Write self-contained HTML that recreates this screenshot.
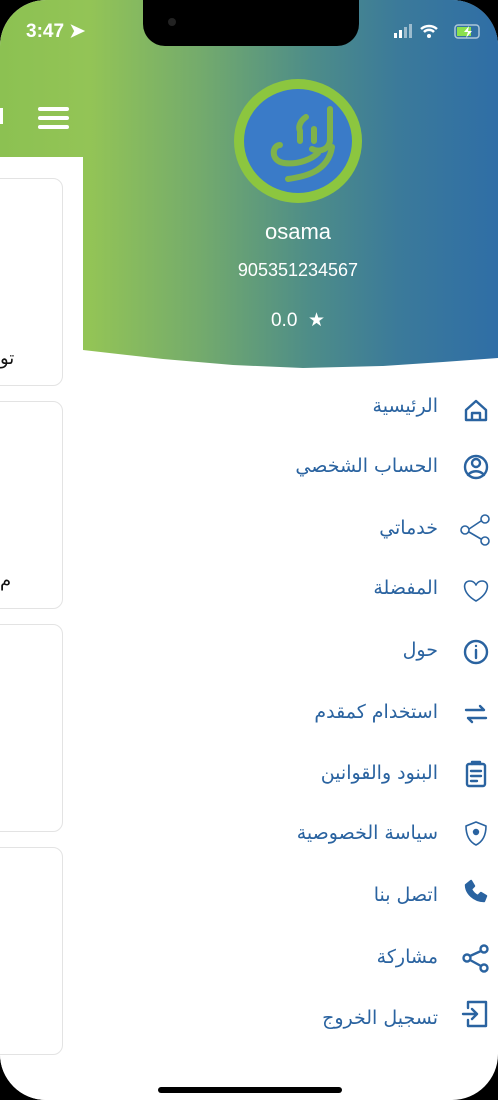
<!DOCTYPE html>
<html><head><meta charset="utf-8"><style>
*{margin:0;padding:0;box-sizing:border-box}
body{width:498px;height:1100px;background:#000;overflow:hidden;position:relative;font-family:"Liberation Sans",sans-serif}
#screen{position:absolute;left:0;top:0;width:498px;height:1100px;border-radius:46px;overflow:hidden;background:#fff}
.grad{position:absolute;top:0;background:linear-gradient(90deg,#8cc152 0%,#93c456 18%,#74ab6c 40%,#4e8d88 62%,#3b7a9a 80%,#2f6ea6 100%);background-size:498px 100%}
.topbar{left:0;width:498px;height:157px}
.drawer{left:83px;width:415px;height:372px;background-position:-83px 0;clip-path:polygon(0 0,415px 0,415px 358px,360px 362px,300px 366px,220px 368px,150px 365px,80px 359px,0 350px)}
.leftpage{position:absolute;left:0;top:157px;width:83px;height:943px;background:#fff}
.card{position:absolute;left:-20px;width:83px;border:1px solid #e3e3e3;border-radius:10px;background:#fff}
.notch{position:absolute;left:143px;top:0;width:216px;height:46px;background:#000;border-radius:0 0 22px 22px}
.item{position:absolute;right:60px;color:#2a63a0;font-size:19px;direction:rtl;font-family:"DejaVu Sans",sans-serif}
.w{color:#fff;position:absolute;text-align:center}
</style></head><body>
<div id="screen">
<div class="grad topbar"></div>
<div class="leftpage"></div>
<div class="grad drawer"></div>
<div class="card" style="top:178px;height:208px"></div>
<div class="card" style="top:401px;height:208px"></div>
<div class="card" style="top:624px;height:208px"></div>
<div class="card" style="top:847px;height:208px"></div>
<div style="position:absolute;left:0;top:348px;font-size:18px;color:#111;font-family:'DejaVu Sans',sans-serif">تو</div>
<div style="position:absolute;left:0;top:570px;font-size:18px;color:#111;font-family:'DejaVu Sans',sans-serif">م</div>
<div style="position:absolute;left:0;top:108px;width:3px;height:16px;background:#fff"></div>
<div style="position:absolute;left:38px;top:107px;width:31px;height:4px;background:#fff;border-radius:2px;box-shadow:0 9px 0 #fff,0 18px 0 #fff"></div>
<div class="notch"></div>
<div style="position:absolute;left:168px;top:18px;width:8px;height:8px;border-radius:50%;background:#222"></div>
<div class="w" style="left:26px;top:20px;font-size:19px;font-weight:bold">3:47 ➤</div>
<svg style="position:absolute;left:394px;top:22px" width="92" height="20" viewBox="0 0 92 20">
<rect x="0" y="11" width="3" height="5" fill="#fff"/><rect x="5" y="8" width="3" height="8" fill="#fff"/><rect x="10" y="5" width="3" height="11" fill="#fff" opacity=".5"/><rect x="15" y="2" width="3" height="14" fill="#fff" opacity=".5"/>
<path d="M27 7a12 12 0 0 1 16 0M30 10a7 7 0 0 1 10 0" stroke="#fff" stroke-width="2.5" fill="none"/><circle cx="35" cy="14" r="2" fill="#fff"/>
<rect x="61" y="3" width="24" height="13" rx="3" fill="none" stroke="#fff" stroke-opacity=".6" stroke-width="1.5"/><rect x="63" y="5" width="14" height="9" fill="#8be04e"/><path d="M75 4l-5 6h4l-2 6 6-7h-4z" fill="#fff"/>
</svg>
<div style="position:absolute;left:234px;top:79px;width:128px;height:124px;border-radius:50%;background:#8cc63f"></div>
<div style="position:absolute;left:244px;top:89px;width:108px;height:104px;border-radius:50%;background:#3a7bc8"></div>
<svg style="position:absolute;left:244px;top:89px" width="108" height="104" viewBox="0 0 108 104" fill="none" stroke="#7fb24a" stroke-width="6" stroke-linecap="round">
<path d="M62 28c-6 4-8 10-6 14"/><path d="M86 20v30c0 10-10 14-18 10M70 40v12M56 44v8"/>
<path d="M36 56c-8 0-10 16 4 18 14 2 28-4 34-10M88 58c-4 26-30 30-44 32"/>
</svg>
<div class="w" style="left:200px;width:196px;top:219px;font-size:22px">osama</div>
<div class="w" style="left:200px;width:196px;top:260px;font-size:18px">905351234567</div>
<div class="w" style="left:200px;width:196px;top:309px;font-size:19px">0.0 &nbsp;★</div>

<div class="item" style="top:395px">الرئيسية</div>
<div class="item" style="top:455px">الحساب الشخصي</div>
<div class="item" style="top:517px">خدماتي</div>
<div class="item" style="top:577px">المفضلة</div>
<div class="item" style="top:639px">حول</div>
<div class="item" style="top:701px">استخدام كمقدم</div>
<div class="item" style="top:762px">البنود والقوانين</div>
<div class="item" style="top:822px">سياسة الخصوصية</div>
<div class="item" style="top:884px">اتصل بنا</div>
<div class="item" style="top:946px">مشاركة</div>
<div class="item" style="top:1007px">تسجيل الخروج</div>

<svg style="position:absolute;left:458px;top:392px" width="36" height="650" viewBox="0 0 36 650" fill="none" stroke="#2a63a0" stroke-width="2.4" stroke-linecap="round" stroke-linejoin="round">
<path d="M8 18l10-9 10 9v10H8z M14 28v-7h8v7"/>
<circle cx="18" cy="75" r="11"/><circle cx="18" cy="71" r="4"/><path d="M10 83c4-5 12-5 16 0"/>
<circle cx="7" cy="138" r="4" stroke-width="1.6"/><circle cx="27" cy="127" r="4" stroke-width="1.6"/><circle cx="27" cy="149" r="4" stroke-width="1.6"/><path d="M11 137l12-8M11 140l12 7" stroke-width="1.6"/>
<path d="M18 209c-14-8-14-20-6-20 3 0 5 2 6 4 1-2 3-4 6-4 8 0 8 12-6 20z" stroke-width="1.6"/>
<circle cx="18" cy="260" r="11"/><path d="M18 258v8M18 254v0"/>
<path d="M8 318h18l-4-4M28 326H10l4 4"/>
<rect x="9" y="372" width="18" height="22" rx="2"/><path d="M14 372v-2h8v2M13 379h10M13 384h10M13 389h6"/>
<path d="M18 430l10 4c0 10-4 16-10 19-6-3-10-9-10-19z" stroke-width="1.6"/><circle cx="18" cy="440" r="2" fill="#2a63a0"/>
<path d="M8 493c0 8 8 16 18 16l2-5-5-3-3 3c-3-1-6-4-7-7l3-3-3-5z" fill="#2a63a0"/>
<circle cx="26" cy="557" r="3.5"/><circle cx="9" cy="566" r="3.5"/><circle cx="26" cy="576" r="3.5"/><path d="M12 564l11-5M12 568l11 6"/>
<path d="M10 616v-6h18v24H10v-6M5 622h14l-5-5M19 622l-5 5"/>
</svg>
<div style="position:absolute;left:158px;top:1087px;width:184px;height:6px;border-radius:3px;background:#000"></div>
</div>
</body></html>
